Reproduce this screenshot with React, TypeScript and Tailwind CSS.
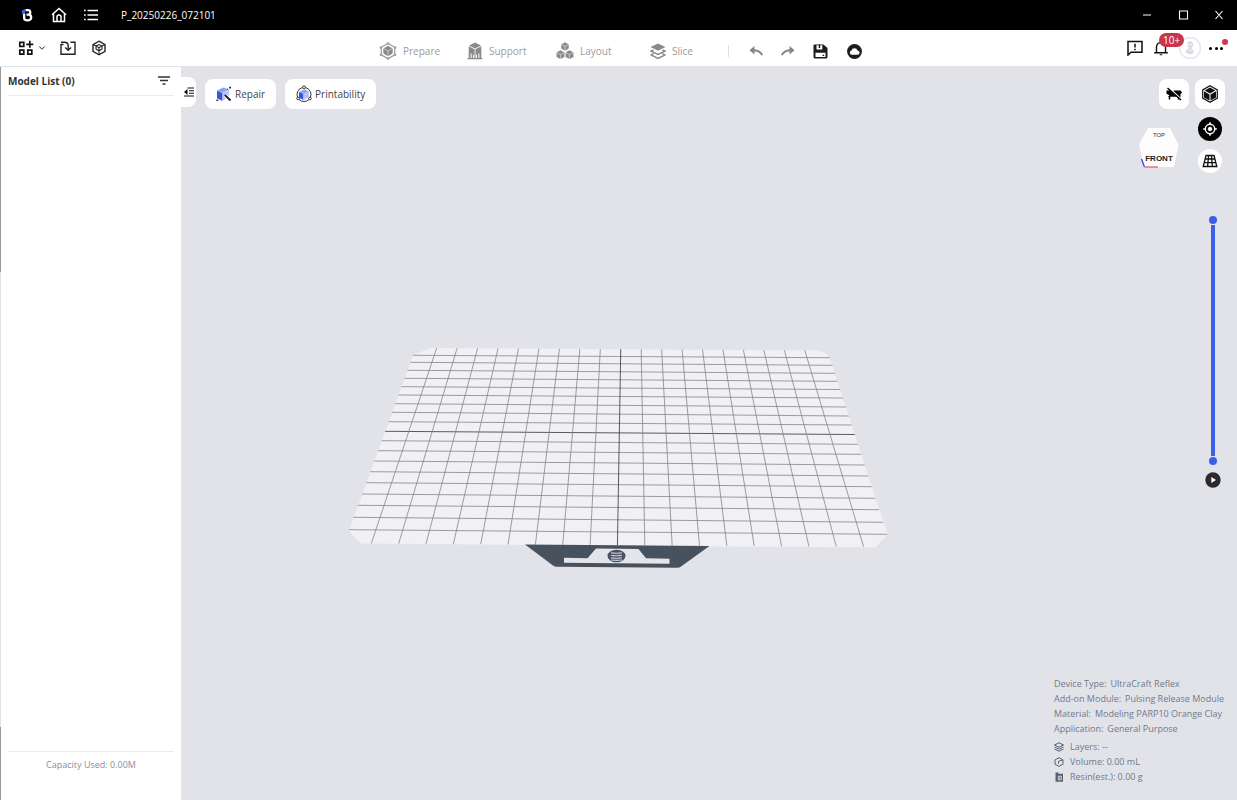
import type * as React from 'react'

import { ChevronDown } from 'lucide-react'

type IconProps = { className?: string }

// left / right end heights of every row line on the build plate, back to front
const ROWS: Array<[number, number]> = [
  [355.3, 357.7], [362.3, 365.3], [370.3, 373.3], [378.3, 381.3], [386.7, 389.5], [395, 398], [403.7, 407],
  [412.3, 416], [421.7, 425], [431.3, 434.5], [440.7, 444.3], [450.7, 454.3], [461, 465], [471.7, 476],
  [482.7, 486.7], [494, 498.3], [505.3, 509.7], [517.3, 522.3], [529.7, 534.3]
]
const COLUMNS = Array.from({ length: 19 }, (_, i) => i)

const DEVICE_INFO = [
  { label: 'Device Type:', value: 'UltraCraft Reflex' },
  { label: 'Add-on Module:', value: 'Pulsing Release Module' },
  { label: 'Material:', value: 'Modeling PARP10 Orange Clay' },
  { label: 'Application:', value: 'General Purpose' }
]

function LogoIcon() {
  return (
    <svg className="h-4 w-3" viewBox="0 0 12 16" fill="none">
      <path d="M4.500 3.200H7a2.200 2.200 0 0 1 0 4.500H5.500M7 7.700h.4a2.800 2.800 0 0 1 0 5.600H5.800a2.700 2.700 0 0 1-2.700-2.700V6.500" stroke="#fff" strokeWidth="2.300" />
      <path d="M.8 3.600 4.300 2v3.700L.8 7z" fill="#3f5fe8" />
    </svg>
  )
}

function HomeIcon() {
  return (
    <svg className="h-4 w-4" viewBox="0 0 16 16" fill="none" stroke="#fff" strokeWidth="1.500">
      <path d="M1 7.700 8 1.500l7 6.200M2.500 6.700v7.800h11V6.700" />
      <path d="M6 14.500V10a2 2 0 0 1 4 0v4.500" />
    </svg>
  )
}

function ListIcon() {
  return (
    <svg className="h-4 w-4" viewBox="0 0 16 16" stroke="#fff" strokeWidth="1.500">
      <path d="M4.500 3.500H15M4.500 8H15M4.500 12.500H15M1 3.500h1.700M1 8h1.700M1 12.500h1.700" />
    </svg>
  )
}

function AddGridIcon() {
  return (
    <svg className="h-4 w-4" viewBox="0 0 16 16" fill="none" stroke="#111" strokeWidth="1.700">
      <path d="M1.800 2.400h4v4h-4zM1.800 10.200h4v4h-4zM9.800 10.200h4v4h-4zM11.800.8v7M8.300 4.300h7" />
    </svg>
  )
}

function ImportIcon() {
  return (
    <svg className="h-4 w-4" viewBox="0 0 16 16" fill="none" stroke="#222" strokeWidth="1.400">
      <path d="M3.500 4.500H1v9.800h14V2.300h-4.500M1 2.300h3.500c2.700 0 3.700 1.400 3.700 3.500v4" />
      <path d="m5.300 7.500 2.900 2.800 2.900-2.800" />
    </svg>
  )
}

function CubeIcon() {
  return (
    <svg className="h-4 w-4" viewBox="0 0 16 16" fill="none" stroke="#222" strokeWidth="1.400">
      <path d="M8 1.200 14 4.600v6.800L8 14.800 2 11.400V4.600z" />
      <path d="m5 6 3-1.400L11 6v3l-3 2-3-2zM5 6l3 1.700L11 6M8 7.700V14M2 4.600 5 6M14 4.600 11 6" strokeWidth="1.100" />
    </svg>
  )
}

// solid cube with light seams, reused by the stage tabs
function Cube({ x, y, r }: { x: number; y: number; r: number }) {
  const w = r * 0.9
  return (
    <g transform={`translate(${x} ${y})`}>
      <path d={`M0 ${-r} ${w} ${-r / 2}V${r / 2}L0 ${r} ${-w} ${r / 2}V${-r / 2}z`} fill="#8a8a8a" />
      <path d={`M${-w} ${-r / 2} 0 0 ${w} ${-r / 2}M0 0V${r}`} stroke="#fff" strokeWidth=".5" fill="none" />
    </g>
  )
}

function PrepareIcon() {
  return (
    <svg className="h-[18px] w-[18px]" viewBox="0 0 18 18" fill="none">
      <path d="M9 1.500 15.800 5.300v7.500L9 16.500 2.200 12.800V5.300z" stroke="#999" strokeWidth="1.200" />
      <Cube x={9} y={9} r={5.2} />
      <path d="M7.700.5h2.600v2H7.700zM7.700 15.500h2.600v2H7.700zM.8 4.500h2.200v2H.8zM15 4.500h2.200v2H15zM.8 11.700h2.200v2H.8zM15 11.700h2.200v2H15z" fill="#999" />
    </svg>
  )
}

function SupportIcon() {
  return (
    <svg className="h-[18px] w-4" viewBox="0 0 16 18" fill="none">
      <path d="M8 .5 14 3.500 8 6.600 2 3.500zM1.700 4.300 7.600 7.300v6L6 12.500V16H4.600v-4.200l-1-.5V16H1.700zM14.300 4.300 8.400 7.300v6l1.600-.8V16h1.400v-4.200l1-.5V16h1.900z" fill="#8a8a8a" />
      <path d="M.5 16.600h15M8 13v3" stroke="#8a8a8a" strokeWidth="1.200" />
    </svg>
  )
}

function LayoutIcon() {
  return (
    <svg className="h-[18px] w-[18px]" viewBox="0 0 18 18" fill="none">
      <Cube x={9} y={4.5} r={4.200} />
      <Cube x={4.5} y={12.7} r={4.400} />
      <Cube x={13.5} y={12.7} r={4.400} />
    </svg>
  )
}

function SliceIcon() {
  return (
    <svg className="h-[18px] w-4" viewBox="0 0 16 18" fill="none">
      <path d="M8 1.500 15.500 5 8 8.700.5 5z" fill="#8a8a8a" />
      <path d="m3.500 8-2.500 1.200L8 12.500l7-3.300L12.500 8M3.500 11.800 1 13l7 3.400L15 13l-2.500-1.200" stroke="#8a8a8a" strokeWidth="1.500" />
    </svg>
  )
}

function ArrowIcon({ className }: IconProps) {
  return (
    <svg className={className} viewBox="0 0 14 14" fill="none">
      <path d="M4 6.200c4.200 0 7.400 1.200 9.200 5" stroke="#858585" strokeWidth="1.900" />
      <path d="M5.500 2v8.400L.5 6.200z" fill="#858585" />
    </svg>
  )
}

function SaveIcon() {
  return (
    <svg className="h-[15px] w-[15px]" viewBox="0 0 15 15">
      <path d="M1.500.5h9L14.500 4v9a1.500 1.500 0 0 1-1.500 1.500H2A1.500 1.500 0 0 1 .5 13V1.500a1 1 0 0 1 1-1z" fill="#1c1c1c" />
      <path d="M3.500 1.300h5.800v4.200H3.500zM2.500 8.700h10v4.200h-10z" fill="#fff" />
      <path d="M5.700.5h1.500V4H5.700zM9.500 10.800h1.700V12H9.500z" fill="#1c1c1c" />
    </svg>
  )
}

function CloudIcon() {
  return (
    <svg className="h-[15px] w-[15px]" viewBox="0 0 15 15">
      <circle cx="7.500" cy="7.500" r="7.400" fill="#1c1c1c" />
      <path d="M4.700 10.800a2.200 2.200 0 0 1-.2-4.300 3.100 3.100 0 0 1 6-.1 2.200 2.200 0 0 1-.2 4.400z" fill="#fff" />
    </svg>
  )
}

function FeedbackIcon() {
  return (
    <svg className="h-4 w-4" viewBox="0 0 16 16" fill="none" stroke="#111" strokeWidth="1.500">
      <path d="M1 1.500h14v10.700H4L1 15zM8 3.700v3.700M8 8.700v1.600" />
    </svg>
  )
}

function BellIcon() {
  return (
    <svg className="h-4 w-4" viewBox="0 0 16 16" fill="none" stroke="#111" strokeWidth="1.400">
      <path d="M3.500 12.500V7a4.500 4.500 0 0 1 9 0v5.500M1.200 12.700h13.600M8 2.500V1" />
      <path d="M6.500 14.300h3c-.2 1.500-2.800 1.500-3 0z" fill="#111" stroke="none" />
    </svg>
  )
}

function AvatarIcon() {
  return (
    <svg className="h-[22px] w-[22px]" viewBox="0 0 22 22">
      <circle cx="11" cy="11" r="10.400" fill="#fff" stroke="#e2e2ea" strokeWidth="1.200" />
      <path d="M8.500 5.500 11 4l3 1.500v3.800L12 11l3 2.500-1 2.800-3.500 1.200-3.500-2 .5-3 2.500-1.500-1.500-2z" fill="#d9d9e6" />
      <path d="m8.500 12 3.500 2 2.500-1M9 6.500 11 8l2.500-1" stroke="#f6f6fb" fill="none" />
    </svg>
  )
}

function RepairIcon() {
  return (
    <svg className="h-4 w-4" viewBox="0 0 16 16">
      <path d="M1 4.500 7.500 1.500 13 3.500 6.500 6.800z" fill="#8ea2f3" />
      <path d="M1 4.700 6.500 7v8L1 12.300z" fill="#3656dc" />
      <path d="M6.500 7 13 3.700v6L6.500 15z" fill="#b9c4f8" />
      <path d="m9.300 9.300 5.300 5.200" stroke="#fff" strokeWidth="3.400" />
      <path d="m8.800 8.800 5.700 5.700" stroke="#171717" strokeWidth="1.800" />
      <path d="M13.200.8h1.800v1.800h-1.800zM.5 13.400h1.700v1.700H.5zM11 2.700h1v1h-1z" fill="#222" />
    </svg>
  )
}

function PrintabilityIcon() {
  return (
    <svg className="h-[18px] w-4" viewBox="0 0 16 18" fill="none">
      <circle cx="8" cy="9.500" r="7" stroke="#333" />
      <path d="M3 6.700 8.500 4.500l4.500 2L7.500 9z" fill="#8ea2f3" />
      <path d="m3 7 4.500 2v6L3 12.700z" fill="#3656dc" />
      <path d="m7.500 9 5.500-2.400v5.700L7.500 15z" fill="#b9c4f8" />
      <g fill="#fff" stroke="#333" strokeWidth=".9">
        <circle cx="8" cy="2.200" r="1.400" />
        <circle cx="2" cy="13.500" r="1.300" />
        <circle cx="14" cy="13.500" r="1.300" />
      </g>
    </svg>
  )
}

function SupportOffIcon() {
  return (
    <svg className="h-4 w-[18px]" viewBox="0 0 18 16" fill="none">
      <path d="M1.500 4.500h4L12 10.700H3l1.500-1.500-3-1.500zM8.500 4.500h7l1.500 2-1.500 1.700v3.300L8.500 5z" fill="#000" />
      <path d="M4.500 10v3.500M13.500 11v2.500M2.500 2 16 14" stroke="#000" strokeWidth="1.500" />
    </svg>
  )
}

function SolidCubeIcon() {
  return (
    <svg className="h-[18px] w-4" viewBox="0 0 16 18" fill="none">
      <path d="M8 .8 15.300 4.900v8.200L8 17.200.7 13.100V4.900z" fill="#fff" stroke="#111" strokeWidth="1.200" />
      <path d="m8 2.500 5.300 3L8 8.500 2.700 5.500zM2 6.300 7.500 9.400v6L2 12.500zM14 6.300 8.500 9.400v6l5.500-2.900z" fill="#111" />
    </svg>
  )
}

function TargetIcon() {
  return (
    <svg className="h-4 w-4" viewBox="0 0 16 16" fill="none" stroke="#fff">
      <circle cx="8" cy="8" r="4.700" strokeWidth="1.400" />
      <circle cx="8" cy="8" r="1.800" fill="#fff" />
      <path d="M8 1.200v2.300M8 12.500v2.300M1.200 8h2.300M12.500 8h2.300" strokeWidth="1.500" />
    </svg>
  )
}

function PlateIcon() {
  return (
    <svg className="h-4 w-4" viewBox="0 0 16 16" fill="none" stroke="#111" strokeWidth="1.300">
      <path d="M4 2.500h8L14.800 13.500H1.200zM3 6h10M2 9.700h12M6.600 2.500 5.600 13.500M9.400 2.500l1 11" />
    </svg>
  )
}

function ViewCube() {
  return (
    <svg className="h-11 w-11" viewBox="0 0 44 44">
      <path d="M11 3h22l8.500 16.500L37 42H7L2 19.500z" fill="#fdfdfe" />
      <text x="22" y="35.500" className="fill-[#222] font-['Liberation_Sans',sans-serif] text-[8px] font-bold" textAnchor="middle">
        FRONT
      </text>
      <text x="22" y="12" className="fill-[#333] font-['Liberation_Sans',sans-serif] text-[6px]" textAnchor="middle">
        TOP
      </text>
      <path d="M4.500 34 7.500 42" stroke="#3a3af0" strokeWidth="1.300" />
      <path d="M7.500 42H21" stroke="#ee5a6a" strokeWidth="1.300" />
    </svg>
  )
}

function BuildPlate() {
  return (
    <svg className="h-[291px] w-[561px] shrink-0" viewBox="338 288 561 291" fill="none">
      <path d="M430 348 815 350.500c7 .5 12 3 15 8L887.500 534.500 875 547.500 361 543.500 349 531 413 355.500z" fill="#f1f1f4" />
      <g stroke="#858588" strokeWidth=".8">
        {ROWS.map(([left, right], i) => (
          <line
            key={i}
            x1={413 - (left - 355.3) * 0.367}
            y1={left}
            x2={830 + (right - 357.7) * 0.323}
            y2={right}
            stroke={i === 9 ? '#333' : undefined}
          />
        ))}
        {COLUMNS.map((i) => (
          <line
            key={i}
            x1={436.7 + i * 20.45}
            y1={348 + i * 0.13}
            x2={371.3 + i * 27.35}
            y2={543.5 + i * 0.18}
            stroke={i === 9 ? '#333' : undefined}
          />
        ))}
      </g>
      <path d="M525 544.500 709.500 546 681 566.500q-1.500 1.200-4 1.200L557 566.700q-2.500 0-4-1.200z" fill="#48525f" />
      <path d="M596 548.500 638.500 549 646 558.300 669.500 558.800v5L564 562.800v-5l23.500.5z" fill="#e3e5eb" />
      <ellipse cx="616.500" cy="556" rx="9" ry="6.300" fill="#48525f" />
      <path d="M611 552.700q5.500 1 11 0M611 555.200q5.500 1 11 0M611 557.700q5.500 1 11 0M611 560q5.500.8 11 0" stroke="#c9ced5" strokeWidth="1.100" />
    </svg>
  )
}

const STAGES = [
  { label: 'Prepare', icon: <PrepareIcon />, className: 'w-[88px]' },
  { label: 'Support', icon: <SupportIcon />, className: 'w-[89px]' },
  { label: 'Layout', icon: <LayoutIcon />, className: 'w-[94px]' },
  { label: 'Slice', icon: <SliceIcon />, className: 'w-[78px]' }
]

function TitleBar() {
  return (
    <header className="flex h-[30px] shrink-0 items-center bg-black pl-[21px] pr-3.5 text-white">
      <LogoIcon />
      <button type="button" aria-label="Home" className="ml-[18px]">
        <HomeIcon />
      </button>
      <button type="button" aria-label="Menu" className="ml-4">
        <ListIcon />
      </button>
      <span className="ml-[22px] text-[10px]">P_20250226_072101</span>
      <svg className="ml-auto h-3 w-20" viewBox="0 0 80 12" fill="none" stroke="#fff" strokeWidth="1.100">
        <path d="M0 6h8M36.500 2h8v8h-8zM72.500 2l7 8M79.500 2l-7 8" />
      </svg>
    </header>
  )
}

function Toolbar() {
  return (
    <div className="grid h-[37px] shrink-0 grid-cols-[1fr_auto_1fr] items-center border-b border-[#e4e4e8] bg-white pl-[18px] pr-3.5">
      <div className="flex items-center">
        <button type="button" aria-label="Add" className="flex items-center gap-[3px]">
          <AddGridIcon />
          <ChevronDown className="h-2.5 w-2.5 text-black" />
        </button>
        <button type="button" aria-label="Import" className="ml-[13px]">
          <ImportIcon />
        </button>
        <button type="button" aria-label="Models" className="ml-[15px]">
          <CubeIcon />
        </button>
      </div>

      <nav className="flex items-center pt-1.5">
        {STAGES.map((stage) => (
          <div key={stage.label} className={stage.className}>
            <button type="button" className="flex items-center gap-1.5 text-[10px] text-[#9b9b9b]">
              {stage.icon}
              {stage.label}
            </button>
          </div>
        ))}
        <span className="h-3 w-px bg-[#e0e0e0]" />
        <button type="button" aria-label="Undo" className="ml-5">
          <ArrowIcon className="h-3.5 w-3.5" />
        </button>
        <button type="button" aria-label="Redo" className="ml-[18px]">
          <ArrowIcon className="h-3.5 w-3.5 -scale-x-100" />
        </button>
        <button type="button" aria-label="Save" className="ml-[18px]">
          <SaveIcon />
        </button>
        <button type="button" aria-label="Cloud" className="ml-[19px]">
          <CloudIcon />
        </button>
      </nav>

      <div className="flex items-center justify-end">
        <button type="button" aria-label="Feedback">
          <FeedbackIcon />
        </button>
        <button type="button" aria-label="Notifications" className="relative z-10 ml-2.5">
          <BellIcon />
          <span className="absolute -top-[7px] left-1.5 rounded-full bg-[#c9354b] px-1 text-[10px] leading-[14px] text-white">10+</span>
        </button>
        <button type="button" aria-label="Account" className="ml-2.5">
          <AvatarIcon />
        </button>
        <button type="button" aria-label="More" className="relative ml-2 flex h-4 w-[14px] items-center justify-between">
          <span className="h-[3px] w-[3px] rounded-full bg-black" />
          <span className="h-[3px] w-[3px] rounded-full bg-black" />
          <span className="h-[3px] w-[3px] rounded-full bg-black" />
          <span className="absolute -right-[5px] -top-px h-1.5 w-1.5 rounded-full bg-[#d8334a]" />
        </button>
      </div>
    </div>
  )
}

function Sidebar() {
  return (
    <aside className="relative flex w-[181px] shrink-0 bg-white">
      <div className="flex w-px flex-col">
        <span className="h-[28%] bg-[#999]" />
        <span className="flex-1 bg-[#e2e2e2]" />
        <span className="h-[10%] bg-[#999]" />
      </div>
      <div className="flex flex-1 flex-col px-[7px]">
        <div className="flex h-[29px] items-center justify-between border-b border-[#ececef] pr-1">
          <h2 className="text-[10px] font-bold text-[#333]">Model List (0)</h2>
          <button type="button" aria-label="Filter">
            <svg className="h-3 w-3" viewBox="0 0 12 12" stroke="#333" strokeWidth="1.300">
              <path d="M0 2h12M2 5.500h8M4.500 9h3" />
            </svg>
          </button>
        </div>
        <div className="mt-auto h-[49px] border-t border-[#ececef] pt-1 text-center text-[9px] leading-[18px] text-[#8b8e99]">
          Capacity Used: 0.00M
        </div>
      </div>
    </aside>
  )
}

function LayerRange() {
  return (
    <div className="mt-[43px] flex w-6 flex-col items-center">
      <div className="relative flex h-[249px] w-2 flex-col items-center">
        <span className="h-2 w-2 rounded-full bg-[#3d5ee6]" />
        <span className="my-px w-1 flex-1 bg-[#3d5ee6]" />
        <span className="h-2 w-2 rounded-full bg-[#3d5ee6]" />
        <input type="range" aria-label="Layer" className="absolute inset-0 h-full w-full opacity-0 [writing-mode:vertical-lr]" />
      </div>
      <button type="button" aria-label="Play" className="mt-[7px]">
        <svg className="h-4 w-4" viewBox="0 0 16 16">
          <circle cx="8" cy="8" r="7.700" fill="#2b2b2b" />
          <path d="M6.300 5 11 8l-4.700 3z" fill="#fff" />
        </svg>
      </button>
    </div>
  )
}

function InfoPanel() {
  return (
    <div className="mt-auto w-[171px] whitespace-nowrap pb-4 text-[9px] leading-[15px] text-[#71798a]">
      {DEVICE_INFO.map((row) => (
        <p key={row.label} className="flex gap-1">
          <span>{row.label}</span>
          <span>{row.value}</span>
        </p>
      ))}
      <p className="mt-[3px] flex items-center gap-1.5">
        <svg className="h-2.5 w-2.5" viewBox="0 0 10 10" fill="none" stroke="#59616f">
          <path d="M5 .8 9.500 3 5 5.200.5 3zM.5 5 5 7.200 9.500 5M.5 7 5 9.200 9.500 7" />
        </svg>
        Layers: --
      </p>
      <p className="flex items-center gap-1.5">
        <svg className="h-2.5 w-2.5" viewBox="0 0 10 10" fill="none" stroke="#59616f">
          <path d="m5 .7 4 2.200v4.300L5 9.400 1 7.200V2.900zM4.500 4.300l4-1.200M4.500 4.300v2.500" />
        </svg>
        Volume: 0.00 mL
      </p>
      <p className="flex items-center gap-1.5">
        <svg className="h-2.5 w-2.5" viewBox="0 0 10 10">
          <path d="M1.500.5h3v1.300H9V9.800H1.500z" fill="#59616f" />
          <path d="M4.300 4.200h3v3.600h-3zM5.800 4.200v3.600" fill="none" stroke="#e1e3ea" strokeWidth=".8" />
        </svg>
        Resin(est.): 0.00 g
      </p>
    </div>
  )
}

function Workspace() {
  return (
    <main className="relative flex min-w-0 flex-1 items-stretch justify-between">
      <div className="flex items-start">
        <button type="button" aria-label="Collapse" className="mt-2.5 flex h-[30px] w-[15px] items-center justify-center rounded-r-lg bg-white">
          <svg className="h-2.5 w-2.5" viewBox="0 0 10 10" stroke="#111">
            <path d="M3.500 1H10M5 3.700h5M5 6.300h5M0 9h10" strokeWidth="1.100" />
            <path d="M3.500 2v6L0 5z" fill="#111" stroke="none" />
          </svg>
        </button>
        <button type="button" className="ml-[9px] mt-3 flex h-[30px] items-center gap-[3px] rounded-lg bg-white px-[11px] text-[10px] text-[#444]">
          <RepairIcon />
          Repair
        </button>
        <button type="button" className="ml-[9px] mt-3 flex h-[30px] items-center gap-[3px] rounded-lg bg-white px-[11px] text-[10px] text-[#444]">
          <PrintabilityIcon />
          Printability
        </button>
      </div>

      <div className="flex flex-col items-end pr-3 pt-3">
        <div className="flex gap-1.5">
          <button type="button" aria-label="Hide supports" className="flex h-[30px] w-[30px] items-center justify-center rounded-lg bg-white">
            <SupportOffIcon />
          </button>
          <button type="button" aria-label="Render mode" className="flex h-[30px] w-[30px] items-center justify-center rounded-lg bg-white">
            <SolidCubeIcon />
          </button>
        </div>
        <div className="mr-[3px] mt-2 flex items-start gap-[17px]">
          <div className="pt-2">
            <ViewCube />
          </div>
          <div className="flex flex-col gap-2">
            <button type="button" aria-label="Center view" className="flex h-6 w-6 items-center justify-center rounded-full bg-black">
              <TargetIcon />
            </button>
            <button type="button" aria-label="Show plate" className="flex h-6 w-6 items-center justify-center rounded-full bg-white">
              <PlateIcon />
            </button>
          </div>
        </div>
        <LayerRange />
        <InfoPanel />
      </div>
    </main>
  )
}

export default function App(): React.JSX.Element {
  return (
    <div className="flex h-screen flex-col overflow-hidden bg-[#e1e3e9] font-['Open_Sans','Noto_Sans',sans-serif]">
      <TitleBar />
      <Toolbar />
      <div className="relative flex min-h-0 flex-1">
        <div className="absolute inset-0 flex items-center justify-center">
          <BuildPlate />
        </div>
        <Sidebar />
        <Workspace />
      </div>
    </div>
  )
}
